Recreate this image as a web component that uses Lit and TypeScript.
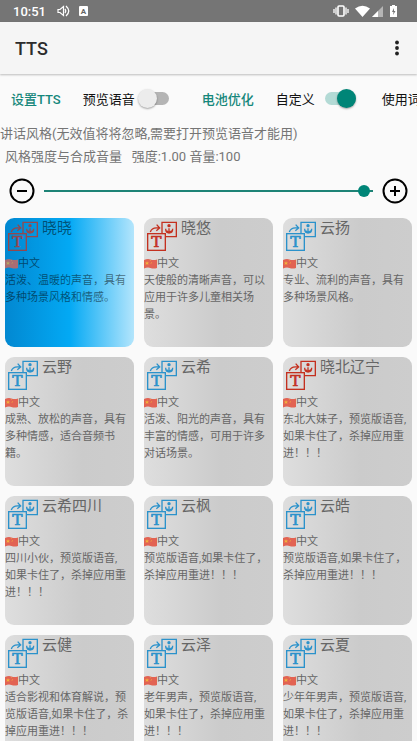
import { LitElement, html, svg, css } from "lit";
import { customElement, property, state } from "lit/decorators.js";
import { classMap } from "lit/directives/class-map.js";

interface Voice {
  name: string;
  female?: boolean;
  text: string;
}

const VOICES: Voice[] = [
  { name: "晓晓", female: true, text: "活泼、温暖的声音，具有\n多种场景风格和情感。" },
  { name: "晓悠", female: true, text: "天使般的清晰声音，可以\n应用于许多儿童相关场\n景。" },
  { name: "云扬", text: "专业、流利的声音，具有\n多种场景风格。" },
  { name: "云野", text: "成熟、放松的声音，具有\n多种情感，适合音频书\n籍。" },
  { name: "云希", text: "活泼、阳光的声音，具有\n丰富的情感，可用于许多\n对话场景。" },
  { name: "晓北辽宁", female: true, text: "东北大妹子，预览版语音,\n如果卡住了，杀掉应用重\n进！！！" },
  { name: "云希四川", text: "四川小伙，预览版语音,\n如果卡住了，杀掉应用重\n进！！！" },
  { name: "云枫", text: "预览版语音,如果卡住了，\n杀掉应用重进！！！" },
  { name: "云皓", text: "预览版语音,如果卡住了，\n杀掉应用重进！！！" },
  { name: "云健", text: "适合影视和体育解说，预\n览版语音,如果卡住了，杀\n掉应用重进！！！" },
  { name: "云泽", text: "老年男声，预览版语音,\n如果卡住了，杀掉应用重\n进！！！" },
  { name: "云夏", text: "少年年男声，预览版语音,\n如果卡住了，杀掉应用重\n进！！！" },
];

@customElement("voice-card")
export class VoiceCard extends LitElement {
  @property({ attribute: false }) voice!: Voice;
  @property({ type: Boolean }) selected = false;

  static styles = css`
    :host { display: block; aspect-ratio: 1; min-width: 0; }
    .card {
      display: flex; flex-direction: column; width: 100%; height: 100%;
      margin: 0; padding: 0; border: 0; border-radius: 9px; overflow: hidden;
      background: linear-gradient(90deg, #dedede, #cbcbcb 60%, #cdcdcd);
      color: #666; font: inherit; font-size: 11px; line-height: 17px; text-align: left;
    }
    .selected {
      background: linear-gradient(90deg, #0288d1, #03a9f4 50%, #b3e5fc);
      color: rgba(0, 0, 0, 0.52);
    }
    .head { display: flex; gap: 2px; height: 37px; padding-left: 3px; box-sizing: border-box; }
    .icon { width: 32px; height: 32px; margin-top: 3px; color: #2b92cb; flex: none; }
    .female { color: #c4301f; }
    .selected .icon { opacity: 0.75; }
    .name { font-size: 15px; line-height: 20px; white-space: nowrap; }
    .lang { display: flex; align-items: center; height: 17px; }
    .flag { width: 13px; height: 10px; }
    .selected .flag { opacity: 0.75; }
    .text { white-space: pre-line; }
  `;

  render() {
    const { name, female, text } = this.voice;
    return html`
      <button class=${classMap({ card: true, selected: this.selected })} aria-pressed=${this.selected}>
        <span class="head">
          <svg class=${classMap({ icon: true, female: !!female })} viewBox="0 0 96 96" fill="none"
            stroke="currentColor" stroke-width="4" aria-hidden="true">
            ${svg`
              <path d="M45 36V4H88V47H57" />
              <rect x="2" y="38" width="53" height="50" />
              <path d="M10 33C13 22 23 19 36 21M29 11L38 21L28 29" />
              <path d="M56 23C56 40 77 40 77 23M66 22V35M59 29L66 36L74 29" stroke-width="4" />
              <circle cx="66" cy="14" r="5" fill="currentColor" stroke="none" />
              <text x="28" y="79" text-anchor="middle" font-family="DejaVu Serif, serif"
                font-size="46" fill="currentColor" stroke-width="2">T</text>
            `}
          </svg>
          <span class="name">${name}</span>
        </span>
        <span class="lang">
          <svg class="flag" viewBox="0 0 26 20" aria-hidden="true">
            ${svg`
              <path d="M0 2Q7 -1 13 1T26 1V18Q19 20 13 18T0 19Z" fill="#e26353" />
              <path d="M6 4l1 3h3l-2 2 1 3L6 10 3 12l1-3-2-2h3z" fill="#f2b33d" />
              <path d="M12 3h2v1h-2zM14 6h2v1h-2zM13 9h2v1h-2z" fill="#f2b33d" />
            `}
          </svg>
          <span>中文</span>
        </span>
        <span class="text">${text}</span>
      </button>
    `;
  }
}

@customElement("app-root")
export class AppRoot extends LitElement {
  @state() private selected = 0;

  static styles = css`
    :host {
      display: flex; flex-direction: column; height: 100vh; overflow: hidden;
      background: #fafafa; color: #212121;
      font-family: Roboto, "Noto Sans CJK SC", sans-serif; font-size: 13px;
    }
    .status {
      display: flex; align-items: center; flex: none; height: 22px; padding: 0 20px 0 13px;
      background: #757575; color: #fff; font-size: 13px; font-weight: 500;
    }
    .status svg { display: block; height: 14px; }
    .time { margin-right: 11px; }
    .sound { width: 13px; margin-right: 9px; }
    .letter { width: 9px; }
    .vibrate { width: 16px; margin-left: auto; margin-right: 6px; }
    .wifi { width: 15px; margin-right: 2px; }
    .signal { width: 11px; margin-right: 7px; }
    .battery { width: 7px; }
    .bar {
      display: flex; align-items: center; justify-content: space-between; flex: none;
      height: 52px; padding: 0 12px 0 15px; background: #f5f5f5;
      box-shadow: 0 1px 2px rgba(0, 0, 0, 0.25);
    }
    h1 { margin: 0; padding-top: 2px; font-size: 18px; font-weight: 500; line-height: 24px; color: #2c2c2c; }
    button { font: inherit; cursor: pointer; }
    .plain { margin: 0; padding: 0; border: 0; background: none; color: inherit; }
    .menu { width: 16px; height: 24px; }
    .menu svg { display: block; width: 16px; height: 24px; }
    .tools {
      display: flex; align-items: center; flex: none; height: 48px; padding-left: 11px;
      overflow: hidden; white-space: nowrap; color: #111;
    }
    .action { flex: none; color: #15877a; font-weight: 500; }
    .toggle { display: flex; align-items: center; flex: none; gap: 3px; margin: 0 33px 0 22px; }
    .custom { gap: 10px; margin: 0 26px 0 22px; }
    .words { margin-left: 0; }
    .switch {
      appearance: none; display: flex; align-items: center; width: 31px; height: 13px; margin: 0;
      border-radius: 7px; background: linear-gradient(#b4b4b4, #b4b4b4) right / 22px 100% no-repeat;
    }
    .switch::before {
      content: ""; width: 19px; height: 19px; flex: none; border-radius: 50%;
      background: #ececec; box-shadow: 0 1px 2px rgba(0, 0, 0, 0.35);
    }
    .switch:checked { justify-content: flex-end; background: #b3dad5; }
    .switch:checked::before { background: #008577; }
    .info { margin: 0; color: #757575; line-height: 23px; white-space: pre; flex: none; }
    .params { padding-left: 5px; }
    .volume { display: flex; align-items: center; flex: none; gap: 9px; height: 50px; padding: 0 9px 4px; box-sizing: border-box; }
    .round { flex: none; width: 26px; height: 26px; }
    .round svg { display: block; width: 26px; height: 26px; }
    .range { appearance: none; flex: 1; min-width: 0; height: 20px; margin: 0; background: linear-gradient(#1d8376, #1d8376) center / 100% 2px no-repeat; }
    .range::-webkit-slider-thumb { appearance: none; width: 12px; height: 12px; border-radius: 50%; background: #008577; }
    .grid {
      display: grid; grid-template-columns: repeat(3, minmax(0, 1fr)); align-content: start;
      gap: 10px; flex: 1; min-height: 0; padding: 0 5px; overflow-y: auto; scrollbar-width: none;
    }
  `;

  render() {
    return html`
      <div class="status">
        <span class="time">10:51</span>
        <svg class="sound" viewBox="0 0 13 14" fill="none" stroke="#fff" aria-hidden="true">
          <path d="M1 5.500H3L6.500 2.500V11.500L3 8.500H1Z" stroke-width="1.200" />
          <path d="M8 5Q9.500 7 8 9M9 2Q14.500 7 9 12" stroke-width="1.300" />
        </svg>
        <svg class="letter" viewBox="0 0 9 14" aria-hidden="true">
          <rect y="2" width="9" height="10" rx="1" fill="#fff" />
          <text x="4.500" y="10" text-anchor="middle" font-size="8" font-weight="700" fill="#666">A</text>
        </svg>
        <svg class="vibrate" viewBox="0 0 16 14" fill="none" stroke="#fff" aria-hidden="true">
          <rect x="5" y="2" width="6" height="10" rx="1" stroke-width="1.600" />
          <path d="M3 3.500V10.500M13 3.500V10.500M1 5V9M15 5V9" stroke-width="1.300" />
        </svg>
        <svg class="wifi" viewBox="0 0 15 14" aria-hidden="true">
          <path d="M0 4.500Q7.500 -1 15 4.500L7.500 13Z" fill="#fff" />
        </svg>
        <svg class="signal" viewBox="0 0 11 14" aria-hidden="true">
          <path d="M11 2V13H0Z" fill="#b5b5b5" />
          <path d="M6 7V13H0Z" fill="#fff" />
        </svg>
        <svg class="battery" viewBox="0 0 7 14" aria-hidden="true">
          <path d="M2 1H5V2H7V13H0V2H2Z" fill="#fff" />
          <path d="M4 4L2 8H3.500L3 11L5.500 7H4Z" fill="#757575" />
        </svg>
      </div>
      <header class="bar">
        <h1>TTS</h1>
        <button class="plain menu" aria-label="更多">
          <svg viewBox="0 0 16 24" fill="#212121">
            <circle cx="8" cy="6.500" r="1.900" /><circle cx="8" cy="12" r="1.900" /><circle cx="8" cy="17.500" r="1.900" />
          </svg>
        </button>
      </header>
      <div class="tools">
        <button class="plain action">设置TTS</button>
        <label class="toggle">预览语音<input class="switch" type="checkbox" /></label>
        <button class="plain action">电池优化</button>
        <label class="toggle custom">自定义<input class="switch" type="checkbox" checked /></label>
        <label class="toggle custom words">使用词<input class="switch" type="checkbox" /></label>
      </div>
      <p class="info">讲话风格(无效值将将忽略,需要打开预览语音才能用)</p>
      <p class="info params">风格强度与合成音量   强度:1.00 音量:100</p>
      <div class="volume">
        <button class="plain round" aria-label="减小">
          <svg viewBox="0 0 26 26" fill="none" stroke="#000" stroke-width="2">
            <circle cx="13" cy="13" r="11.500" /><path d="M8 13H18" />
          </svg>
        </button>
        <input class="range" type="range" min="0" max="101" value="100" aria-label="音量" />
        <button class="plain round" aria-label="增大">
          <svg viewBox="0 0 26 26" fill="none" stroke="#000" stroke-width="2">
            <circle cx="13" cy="13" r="11.500" /><path d="M8 13H18M13 8V18" />
          </svg>
        </button>
      </div>
      <main class="grid">
        ${VOICES.map(
          (voice, i) => html`<voice-card .voice=${voice} .selected=${i === this.selected}
            @click=${() => (this.selected = i)}></voice-card>`
        )}
      </main>
    `;
  }
}
